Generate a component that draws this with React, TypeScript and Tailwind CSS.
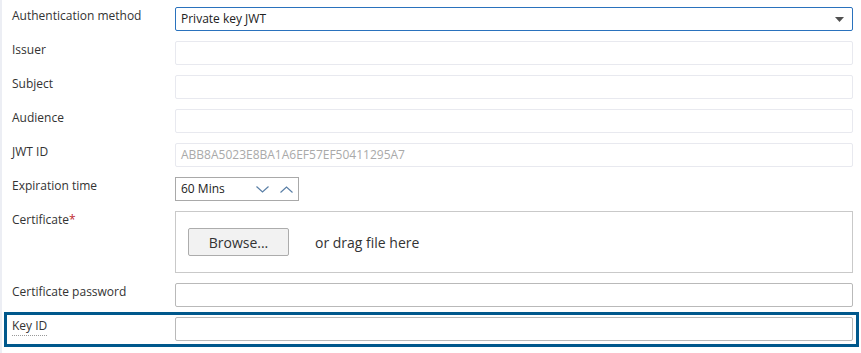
import React from 'react';

const font = { fontFamily: '"Open Sans", "Noto Sans", Arial, sans-serif' };

interface RowProps {
  label: React.ReactNode;
  children: React.ReactNode;
  className?: string;
}

const Row: React.FC<RowProps> = ({ label, children, className = '' }) => (
  <div className={`flex items-start ${className}`}>
    <div className="w-[173px] shrink-0 pl-[10px] text-[12px] leading-[16px] text-[#333] pt-[1px]">{label}</div>
    <div className="flex-1 pr-[8px]">{children}</div>
  </div>
);

const TextBox: React.FC<{ value?: string; placeholder?: string; border?: string }> = ({
  value,
  placeholder,
  border = 'border-[#e8e9ef]',
}) => (
  <div className={`h-[24px] border ${border} rounded-[2px] bg-white flex items-center px-[5px] text-[12px] text-[#333]`}>
    {value}
    {placeholder && <span className="text-[#a9a9a9]">{placeholder}</span>}
  </div>
);

export default function App() {
  return (
    <div className="w-[861px] h-[353px] bg-white border-l-2 border-[#eceef4] flex flex-col pt-[7px]" style={font}>
      <div className="flex flex-col gap-[10px]">
        <Row label="Authentication method">
          <div className="h-[24px] border border-[#2a72bd] rounded-[2px] flex items-center justify-between pl-[5px] pr-[8px] text-[12px] text-[#222]">
            <span>Private key JWT</span>
            <svg width="9" height="5" viewBox="0 0 9 5">
              <path d="M0 0 H9 L4.5 5 Z" fill="#505050" />
            </svg>
          </div>
        </Row>
        <Row label="Issuer">
          <TextBox />
        </Row>
        <Row label="Subject">
          <TextBox />
        </Row>
        <Row label="Audience">
          <TextBox />
        </Row>
        <Row label="JWT ID">
          <TextBox placeholder="ABB8A5023E8BA1A6EF57EF50411295A7" />
        </Row>
        <Row label="Expiration time">
          <div className="w-[124px] h-[24px] border border-[#a9a9a9] flex items-center pl-[5px] text-[12px] text-[#222]">
            <span className="flex-1">60 Mins</span>
            <svg width="13" height="7" viewBox="0 0 13 7" className="mr-[11px]">
              <path d="M0.5 0.5 L6.5 6 L12.5 0.5" fill="none" stroke="#5a7fa6" strokeWidth="1.2" />
            </svg>
            <svg width="13" height="7" viewBox="0 0 13 7" className="mr-[5px]">
              <path d="M0.5 6.5 L6.5 1 L12.5 6.5" fill="none" stroke="#5a7fa6" strokeWidth="1.2" />
            </svg>
          </div>
        </Row>
        <Row
          label={
            <>
              Certificate<span className="text-[#c0272d]">*</span>
            </>
          }
        >
          <div className="h-[62px] border border-[#c9c9c9] flex items-center pl-[12px]">
            <button className="w-[101px] h-[28px] bg-[#f2f2f2] border border-[#acacac] rounded-[2px] text-[14px] text-[#333]">
              Browse...
            </button>
            <span className="ml-[26px] text-[14px] text-[#333]">or drag file here</span>
          </div>
        </Row>
        <Row label="Certificate password">
          <TextBox border="border-[#b9b9b9]" />
        </Row>
      </div>
      <div className="mt-[5px] ml-[2px] mr-[2px] border-[3px] border-[#00588c] flex items-start pt-[2px] pb-[3px]">
        <div className="w-[168px] shrink-0 pl-[5px] text-[12px] leading-[16px] text-[#333] pt-[1px]">
          <span className="border-b border-dotted border-[#999] pb-[1px]">Key ID</span>
        </div>
        <div className="flex-1 pr-[3px]">
          <TextBox border="border-[#b9b9b9]" />
        </div>
      </div>
    </div>
  );
}
